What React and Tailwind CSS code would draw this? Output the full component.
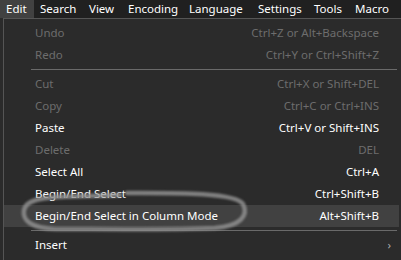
import React from "react";

const items = [
  { t: "Undo", s: "Ctrl+Z or Alt+Backspace", d: true },
  { t: "Redo", s: "Ctrl+Y or Ctrl+Shift+Z", d: true },
  { sep: true },
  { t: "Cut", s: "Ctrl+X or Shift+DEL", d: true },
  { t: "Copy", s: "Ctrl+C or Ctrl+INS", d: true },
  { t: "Paste", s: "Ctrl+V or Shift+INS" },
  { t: "Delete", s: "DEL", d: true },
  { t: "Select All", s: "Ctrl+A" },
  { t: "Begin/End Select", s: "Ctrl+Shift+B" },
  { t: "Begin/End Select in Column Mode", s: "Alt+Shift+B", hl: true },
  { sep: true },
  { t: "Insert", sub: true },
];

const menus = [
  ["Edit", "w-[34px] bg-[#414141]"],
  ["Search", "w-[49px]"],
  ["View", "w-[39px]"],
  ["Encoding", "w-[61px]"],
  ["Language", "w-[69px]"],
  ["Settings", "w-[56px]"],
  ["Tools", "w-[41px]"],
  ["Macro", "w-[46px]"],
];

export default function App() {
  return (
    <div
      className="relative w-[401px] h-[260px] overflow-hidden bg-[#2b2b2b] text-[11.5px] text-white"
      style={{ fontFamily: '"Segoe UI", "Noto Sans", sans-serif' }}
    >
      <div className="flex h-[18px] bg-[#202020] items-center">
        {menus.map(([m, c]) => (
          <div key={m} className={`h-full shrink-0 whitespace-nowrap flex items-center pl-[6px] ${c}`}>
            {m}
          </div>
        ))}
      </div>
      <div className="ml-[3px] border-l border-t border-[#555] h-[242px] pt-[3px]">
        {items.map((it, i) =>
          it.sep ? (
            <div key={i} className="h-[7px] flex items-center pl-[27px] pr-[4px]">
              <div className="h-px w-full bg-[#6a6a6a]" />
            </div>
          ) : (
            <div
              key={i}
              className={`h-[22px] flex items-center pl-[31px] pr-[20px] mr-[2px] ${
                it.hl ? "bg-[#414141]" : ""
              } ${it.d ? "text-[#6d6d6d]" : "text-white"}`}
            >
              <span className="flex-1">{it.t}</span>
              {it.s && <span>{it.s}</span>}
              {it.sub && <span className="text-[#aaa] -mr-[12px]">›</span>}
            </div>
          )
        )}
      </div>
      <svg
        className="absolute left-0 top-0 pointer-events-none"
        width="401"
        height="260"
        style={{ filter: "blur(1.1px)" }}
      >
        <path
          d="M127 193 C170 193 235 192 243 204 C249 216 240 226 215 228 C170 230 100 229 55 229 C32 228 22 221 24 210 C26 201 38 198 60 197 C85 196 105 196 120 195"
          fill="none"
          stroke="#8f8f8f"
          strokeWidth="4.5"
          strokeLinecap="round"
          opacity="0.85"
        />
      </svg>
    </div>
  );
}
